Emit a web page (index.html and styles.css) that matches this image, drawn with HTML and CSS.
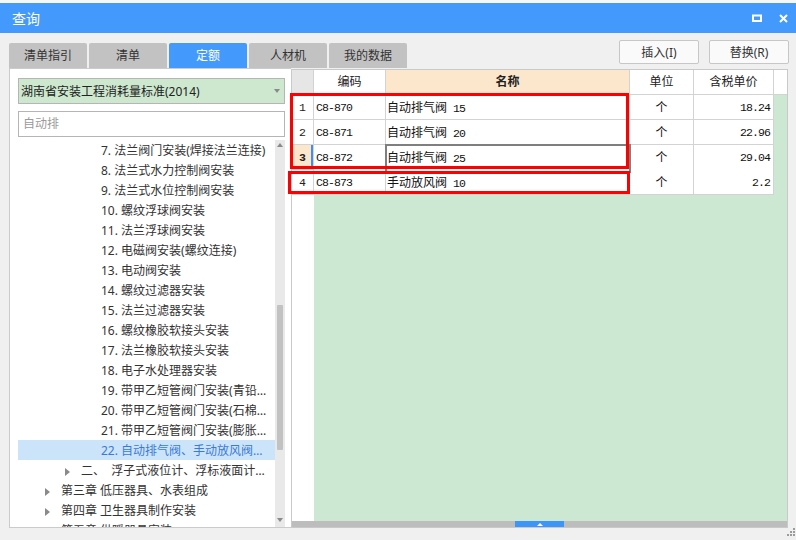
FILE: index.html
```html
<!DOCTYPE html>
<html lang="zh-CN">
<head>
<meta charset="utf-8">
<title>查询</title>
<link rel="stylesheet" href="styles.css">
</head>
<body>
<div class="backdrop"></div>
<div class="titlebar">
  <span class="title">查询</span>
  <div class="win-ctrls">
    <svg class="ic" width="10" height="8" viewBox="0 0 10 8"><rect x="1" y="1.5" width="8" height="5.5" fill="none" stroke="#fff" stroke-width="2"/></svg>
    <svg class="ic" width="9" height="9" viewBox="0 0 9 9"><path d="M1 1L8 8M8 1L1 8" stroke="#fff" stroke-width="2" fill="none"/></svg>
  </div>
</div>
<div class="toolbar">
  <div class="tabs">
    <div class="tab">清单指引</div>
    <div class="tab">清单</div>
    <div class="tab active">定额</div>
    <div class="tab">人材机</div>
    <div class="tab">我的数据</div>
  </div>
  <div class="actions">
    <button class="btn">插入(I)</button>
    <button class="btn">替换(R)</button>
  </div>
</div>
<div class="main">
  <div class="left">
    <div class="select"><span>湖南省安装工程消耗量标准(2014)</span><span class="caret-down"></span></div>
    <div class="search">自动排</div>
    <div class="tree">
      <div class="tree-list">
        <div class="node l2">7. 法兰阀门安装(焊接法兰连接)</div>
        <div class="node l2">8. 法兰式水力控制阀安装</div>
        <div class="node l2">9. 法兰式水位控制阀安装</div>
        <div class="node l2">10. 螺纹浮球阀安装</div>
        <div class="node l2">11. 法兰浮球阀安装</div>
        <div class="node l2">12. 电磁阀安装(螺纹连接)</div>
        <div class="node l2">13. 电动阀安装</div>
        <div class="node l2">14. 螺纹过滤器安装</div>
        <div class="node l2">15. 法兰过滤器安装</div>
        <div class="node l2">16. 螺纹橡胶软接头安装</div>
        <div class="node l2">17. 法兰橡胶软接头安装</div>
        <div class="node l2">18. 电子水处理器安装</div>
        <div class="node l2">19. 带甲乙短管阀门安装(青铅接口)</div>
        <div class="node l2">20. 带甲乙短管阀门安装(石棉水泥接口)</div>
        <div class="node l2">21. 带甲乙短管阀门安装(膨胀水泥接口)</div>
        <div class="node l2 sel">22. 自动排气阀、手动放风阀安装</div>
        <div class="node l1"><span class="caret-right"></span>二、&nbsp; 浮子式液位计、浮标液面计安装</div>
        <div class="node l0"><span class="caret-right"></span>第三章 低压器具、水表组成</div>
        <div class="node l0"><span class="caret-right"></span>第四章 卫生器具制作安装</div>
        <div class="node l0"><span class="caret-right"></span>第五章 供暖器具安装</div>
      </div>
      <div class="vscroll">
        <span class="arrow-up"></span>
        <span class="vthumb"></span>
        <span class="arrow-down"></span>
      </div>
    </div>
  </div>
  <div class="right">
    <div class="ghead">
      <div class="hc rn"></div>
      <div class="hc code">编码</div>
      <div class="hc name">名称</div>
      <div class="hc unit">单位</div>
      <div class="hc price">含税单价</div>
      <div class="hc fill"></div>
    </div>
    <div class="gbody">
      <div class="rncol">
        <div class="rn">1</div>
        <div class="rn">2</div>
        <div class="rn cur">3</div>
        <div class="rn">4</div>
      </div>
      <div class="data">
        <div class="row">
          <div class="c code">C8-870</div>
          <div class="c name">自动排气阀<span class="num"> 15</span></div>
          <div class="c unit">个</div>
          <div class="c price">18.24</div>
        </div>
        <div class="row">
          <div class="c code">C8-871</div>
          <div class="c name">自动排气阀<span class="num"> 20</span></div>
          <div class="c unit">个</div>
          <div class="c price">22.96</div>
        </div>
        <div class="row">
          <div class="c code">C8-872</div>
          <div class="c name sel">自动排气阀<span class="num"> 25</span></div>
          <div class="c unit">个</div>
          <div class="c price">29.04</div>
        </div>
        <div class="row">
          <div class="c code">C8-873</div>
          <div class="c name">手动放风阀<span class="num"> 10</span></div>
          <div class="c unit">个</div>
          <div class="c price">2.2</div>
        </div>
      </div>
    </div>
    <div class="hscroll"><div class="hthumb"><span class="tri-up"></span></div></div>
    <div class="mark mark1"></div>
    <div class="mark mark2"></div>
  </div>
</div>
<div class="footer">
  <svg width="8" height="8" viewBox="0 0 8 8"><g fill="#9c9c9c"><rect x="6" y="0" width="2" height="2"/><rect x="3" y="3" width="2" height="2"/><rect x="6" y="3" width="2" height="2"/><rect x="0" y="6" width="2" height="2"/><rect x="3" y="6" width="2" height="2"/><rect x="6" y="6" width="2" height="2"/></g></svg>
</div>
</body>
</html>
```
FILE: styles.css
```css
* { box-sizing: border-box; }
html, body { margin: 0; padding: 0; }
body {
  width: 796px;
  height: 540px;
  overflow: hidden;
  background: #f0f0f0;
  font-family: "Noto Sans", "Noto Sans CJK SC", sans-serif;
  font-size: 12px;
  color: #333;
}
.backdrop { height: 3px; background: #f7f7f7; }
.titlebar {
  height: 30px;
  background: #4499fd;
  display: flex;
  align-items: center;
  justify-content: space-between;
  padding: 0 8px 0 12px;
  color: #fff;
}
.title { font-family: "Noto Sans CJK SC", sans-serif; font-size: 14px; line-height: 30px; }
.win-ctrls { display: flex; align-items: center; gap: 17px; }
.ic { display: block; }
.toolbar {
  height: 35px;
  display: flex;
  justify-content: space-between;
  padding: 0 7px 0 9px;
}
.tabs { display: flex; gap: 2px; align-self: flex-end; }
.tab {
  width: 78px;
  height: 25px;
  line-height: 25px;
  text-align: center;
  background: #c2c2c2;
  border-radius: 2px 2px 0 0;
  color: #333;
}
.tab.active { background: #4499fd; color: #fff; }
.actions { display: flex; gap: 10px; padding-top: 7px; }
.btn {
  width: 80px;
  height: 24px;
  border: 1px solid #c7c7c7;
  border-radius: 2px;
  background: #fafafa;
  font: 12px "Noto Sans", "Noto Sans CJK SC", sans-serif;
  color: #333;
  padding: 0;
}
.main { display: flex; height: 460px; padding-left: 9px; }
.left {
  width: 282px;
  border: 1px solid #cbcbcb;
  border-right: none;
  background: #fff;
  padding: 9px 6px 0 8px;
  display: flex;
  flex-direction: column;
}
.select {
  height: 26px;
  border: 1px solid #b5b5b5;
  background: #cde8cf;
  display: flex;
  align-items: center;
  justify-content: space-between;
  padding: 0 4px 0 2px;
  color: #222;
}
.caret-down {
  width: 0; height: 0;
  border-top: 4px solid #8a8a8a;
  border-left: 3px solid transparent;
  border-right: 3px solid transparent;
}
.search {
  margin-top: 7px;
  height: 26px;
  border: 1px solid #b5b5b5;
  background: #fff;
  padding-left: 4px;
  line-height: 24px;
  color: #9a9a9a;
}
.tree { margin-top: 3px; flex: 1; min-height: 0; display: flex; overflow: hidden; }
.tree-list { flex: 1; min-width: 0; overflow: hidden; }
.node {
  height: 20px;
  line-height: 21px;
  white-space: nowrap;
  overflow: hidden;
  text-overflow: ellipsis;
  padding-right: 6px;
  color: #333;
}
.node.l2 { padding-left: 83px; }
.node.l1 { padding-left: 47px; }
.node.l0 { padding-left: 27px; }
.node.sel { background: #cce4f9; color: #3a7ad6; }
.caret-right {
  display: inline-block;
  width: 0; height: 0;
  border-left: 5px solid #8a8a8a;
  border-top: 4px solid transparent;
  border-bottom: 4px solid transparent;
  margin-right: 11px;
  vertical-align: -1px;
}
.vscroll {
  width: 10px;
  background: #e9e9e9;
  display: flex;
  flex-direction: column;
  align-items: center;
}
.arrow-up {
  margin-top: 3px;
  width: 0; height: 0;
  border-bottom: 4px solid #8a8a8a;
  border-left: 3.5px solid transparent;
  border-right: 3.5px solid transparent;
}
.vthumb {
  margin-top: 158px;
  width: 6px;
  height: 145px;
  background: #c2c2c2;
  border-radius: 1px;
}
.arrow-down {
  margin-top: auto;
  margin-bottom: 5px;
  width: 0; height: 0;
  border-top: 4px solid #8a8a8a;
  border-left: 3.5px solid transparent;
  border-right: 3.5px solid transparent;
}
.right {
  position: relative;
  width: 497px;
  height: 459px;
  margin-top: 1px;
  border: 1px solid #c9c9c9;
  background: #fff;
  display: flex;
  flex-direction: column;
}
.ghead { display: flex; height: 25px; flex-shrink: 0; }
.hc {
  border-right: 1px solid #d3d3d3;
  border-bottom: 1px solid #d3d3d3;
  text-align: center;
  line-height: 24px;
  color: #222;
}
.hc.rn { width: 22px; background: #e6e6e6; }
.hc.code { width: 72px; }
.hc.name { width: 244px; background: #fde7cc; font-weight: bold; }
.hc.unit { width: 64px; }
.hc.price { width: 80px; }
.hc.fill { flex: 1; border-right: none; }
.gbody { flex: 1; min-height: 0; display: flex; }
.rncol { width: 22px; background: #fff; }
.rn {
  height: 25px;
  border-right: 1px solid #d3d3d3;
  border-bottom: 1px solid #d3d3d3;
  text-align: center;
  line-height: 25px;
  font-family: "Liberation Mono", monospace;
  font-size: 11.5px;
  color: #222;
}
.rn.cur { background: #fde7cc; font-weight: bold; box-shadow: inset -2px 0 #3d8ef5; }
.data { flex: 1; background: #cde8d2; }
.row { display: grid; grid-template-columns: 72px 244px 64px 80px; height: 25px; }
.c {
  background: #fff;
  border-right: 1px solid #d3d3d3;
  border-bottom: 1px solid #d3d3d3;
  line-height: 25px;
  white-space: nowrap;
  overflow: hidden;
  color: #111;
}
.c.code, .c.price, .num {
  font-family: "Liberation Mono", monospace;
  font-size: 11.5px;
  letter-spacing: -0.9px;
}
.c.code { padding-left: 2px; }
.c.name { padding-left: 1px; }
.c.name.sel { position: relative; z-index: 1; overflow: visible; outline: 2px solid #7f7f7f; outline-offset: -1px; }
.c.unit { text-align: center; }
.c.price { text-align: right; padding-right: 3px; }
.hscroll {
  height: 6px;
  flex-shrink: 0;
  background: #bdbdbd;
  display: flex;
  justify-content: center;
}
.hthumb {
  width: 49px;
  height: 6px;
  background: #3d95fa;
  display: flex;
  align-items: center;
  justify-content: center;
}
.tri-up {
  width: 0; height: 0;
  border-bottom: 3px solid #fff;
  border-left: 3px solid transparent;
  border-right: 3px solid transparent;
}
.mark { position: absolute; border: 3px solid #ff0000; z-index: 2; }
.mark1 { left: -2px; top: 23px; width: 339px; height: 76px; }
.mark2 { left: -4px; top: 101px; width: 342px; height: 23px; }
.footer { height: 12px; display: flex; justify-content: flex-end; padding-right: 1px; }
```
